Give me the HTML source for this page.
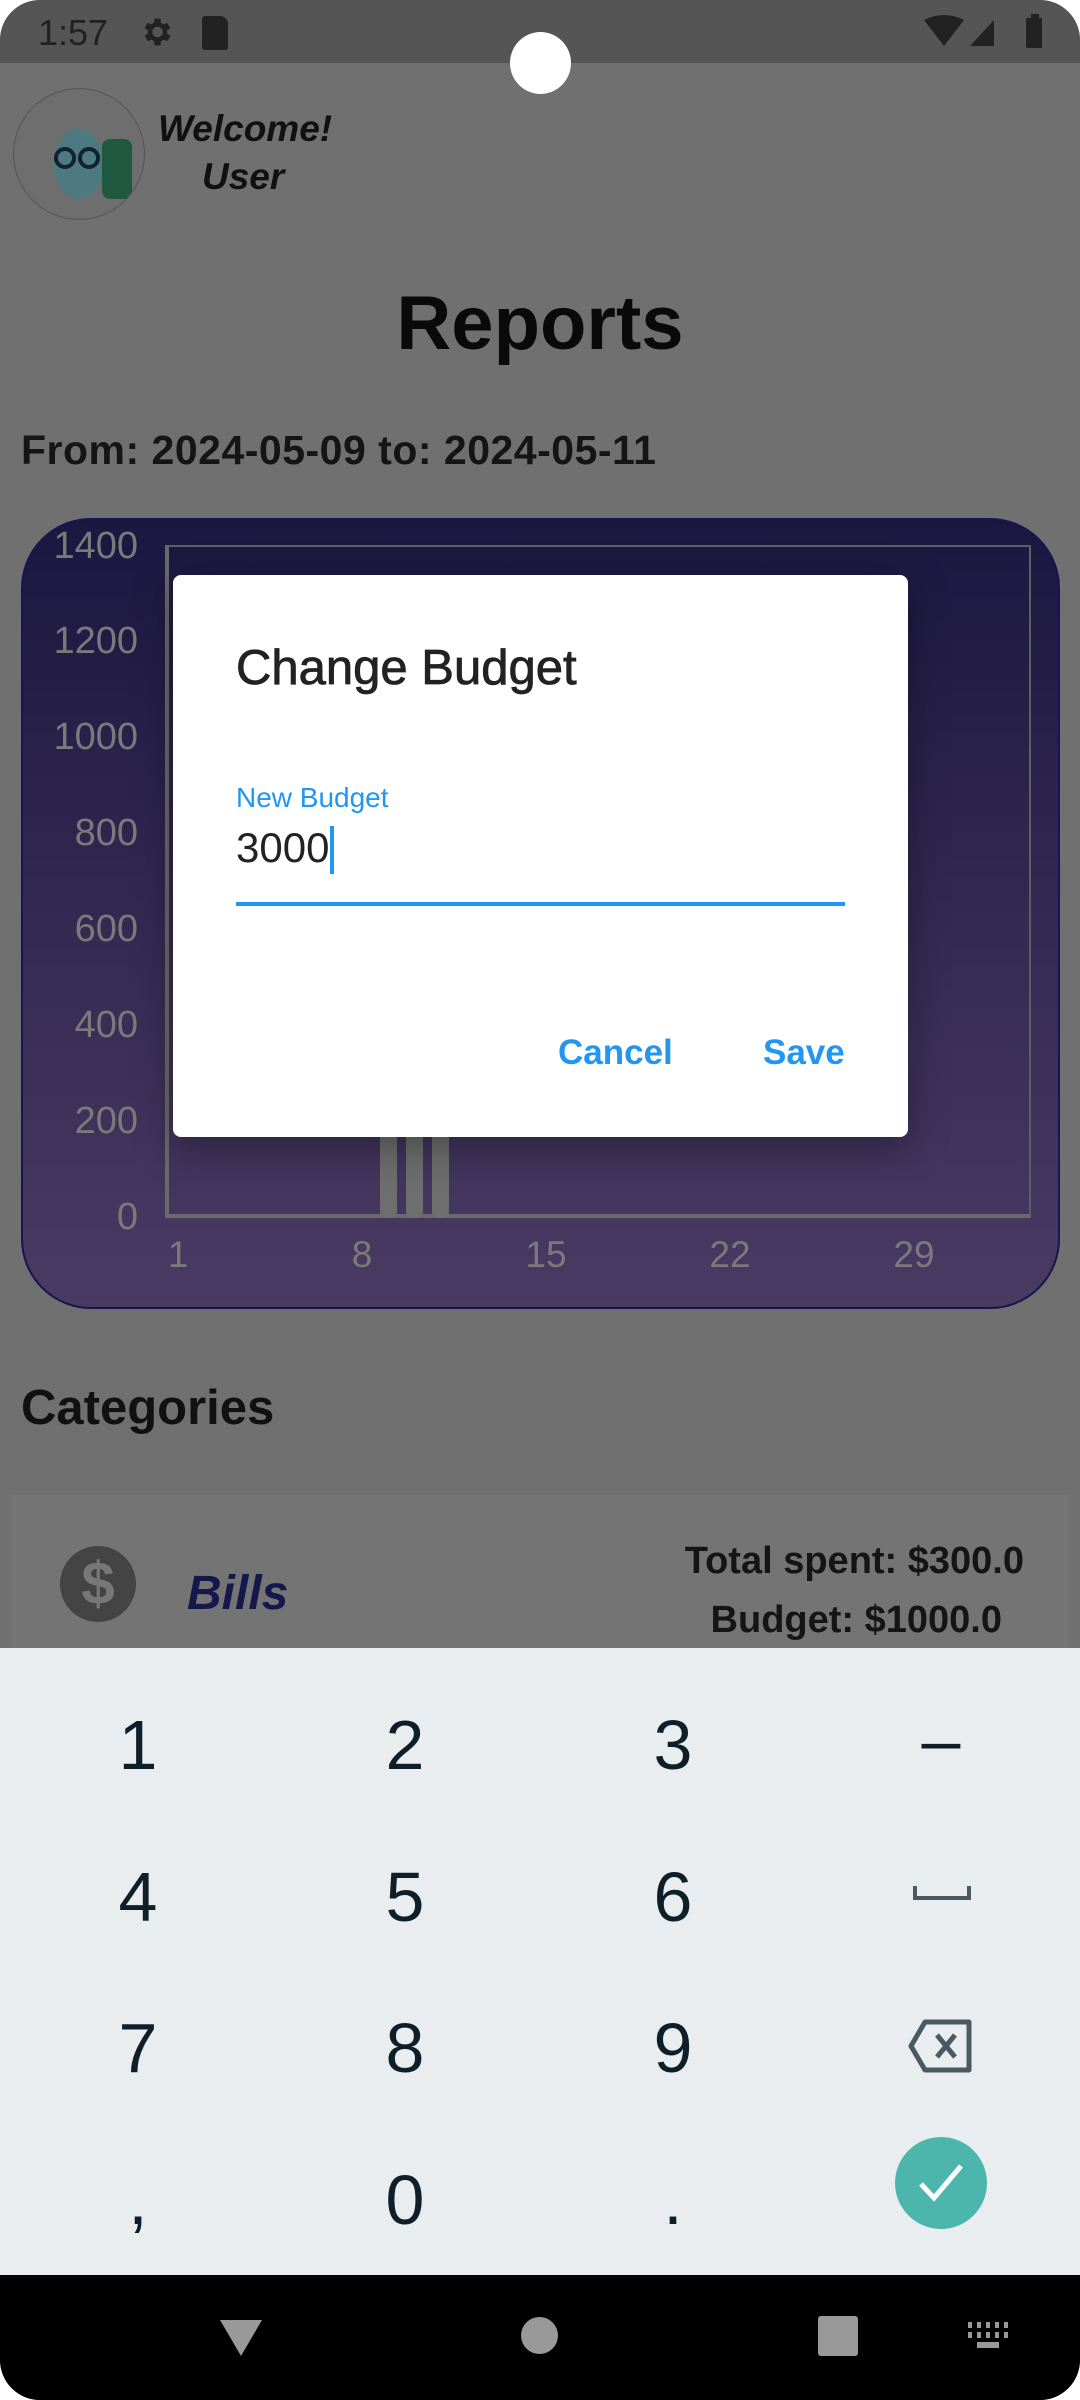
<!DOCTYPE html>
<html><head><meta charset="utf-8"><style>
*{margin:0;padding:0;box-sizing:border-box}
body{width:1080px;height:2400px;background:#fff;font-family:"Liberation Sans",sans-serif;overflow:hidden}
#s{position:absolute;left:0;top:0;width:1080px;height:2400px;border-radius:40px;overflow:hidden;background:#707070}
.a{position:absolute}
.yl{position:absolute;right:942px;font-size:38px;color:#7a7a7a;text-align:right;line-height:1}
.xl{position:absolute;top:1236px;font-size:37px;color:#7a7a7a;line-height:1;transform:translateX(-50%)}
.k{position:absolute;font-size:70px;color:#0f1f2a;transform:translate(-50%,-50%);line-height:1}
</style></head><body><div id="s">
<div class="a" style="left:0;top:0;width:1080px;height:63px;background:#555"></div>
<div class="a" style="left:38px;top:12px;font-size:36px;color:#222">1:57</div>
<svg class="a" style="left:138px;top:14px" width="36" height="36" viewBox="0 0 24 24"><path fill="#222" d="M19.4 13a7.5 7.5 0 0 0 0-2l2.1-1.6-2-3.5-2.5 1a7 7 0 0 0-1.7-1L15 3h-4l-.4 2.9a7 7 0 0 0-1.7 1l-2.5-1-2 3.5L6.6 11a7.5 7.5 0 0 0 0 2l-2.1 1.6 2 3.5 2.5-1a7 7 0 0 0 1.7 1L11 21h4l.4-2.9a7 7 0 0 0 1.7-1l2.5 1 2-3.5zM13 15.5a3.5 3.5 0 1 1 0-7 3.5 3.5 0 0 1 0 7z"/></svg>
<div class="a" style="left:202px;top:16px;width:26px;height:34px;background:#222;border-radius:3px 8px 3px 3px"></div>
<svg class="a" style="left:922px;top:14px" width="120" height="36" viewBox="0 0 120 36"><path fill="#222" d="M2 6 Q22 -4 42 6 L22 32Z"/><path fill="#222" d="M48 32 L72 6 V32Z"/><rect x="104" y="4" width="18" height="30" rx="2" fill="#222"/><rect x="109" y="0" width="8" height="5" fill="#222"/></svg>
<div class="a" style="left:510px;top:32px;width:61px;height:62px;border-radius:50%;background:#fff"></div>
<div class="a" style="left:13px;top:88px;width:132px;height:132px;border-radius:50%;border:1px solid #555;background:#6e6e6e;overflow:hidden">
<div class="a" style="left:40px;top:40px;width:50px;height:70px;border-radius:50%;background:#4d7a80"></div>
<div class="a" style="left:88px;top:50px;width:30px;height:60px;border-radius:8px;background:#1f5a40"></div>
<div class="a" style="left:40px;top:58px;width:22px;height:22px;border-radius:50%;border:4px solid #123"></div>
<div class="a" style="left:64px;top:58px;width:22px;height:22px;border-radius:50%;border:4px solid #123"></div></div>
<div class="a" style="left:158px;top:108px;font-size:37px;font-weight:bold;font-style:italic;color:#111">Welcome!</div>
<div class="a" style="left:202px;top:156px;font-size:37px;font-style:italic;font-weight:bold;color:#111">User</div>
<div class="a" style="left:0;width:1080px;top:280px;text-align:center;font-size:76px;font-weight:bold;color:#0a0a0a">Reports</div>
<div class="a" style="left:21px;top:427px;font-size:41px;font-weight:bold;color:#151515;letter-spacing:0.5px">From: 2024-05-09 to: 2024-05-11</div>
<div class="a" style="left:21px;top:518px;width:1039px;height:791px;border-radius:70px;border:2px solid #1a1450;background:linear-gradient(#1b1740,#4a3b63)"></div>
<div class="a" style="left:165px;top:545px;width:866px;height:673px;border:2px solid #5e5e66;border-left:4px solid #6a6a6a;border-bottom:4px solid #6a6a6a"></div>
<div class="yl" style="top:527px">1400</div><div class="yl" style="top:622px">1200</div><div class="yl" style="top:718px">1000</div><div class="yl" style="top:814px">800</div><div class="yl" style="top:910px">600</div><div class="yl" style="top:1006px">400</div><div class="yl" style="top:1102px">200</div><div class="yl" style="top:1198px">0</div>
<div class="xl" style="left:178px">1</div><div class="xl" style="left:362px">8</div><div class="xl" style="left:546px">15</div><div class="xl" style="left:730px">22</div><div class="xl" style="left:914px">29</div>
<div class="a" style="left:380px;top:1130px;width:17px;height:88px;background:#6e6e6e;border-radius:6px"></div>
<div class="a" style="left:406px;top:1130px;width:17px;height:88px;background:#6e6e6e;border-radius:6px"></div>
<div class="a" style="left:432px;top:1130px;width:17px;height:88px;background:#6e6e6e;border-radius:6px"></div>
<div class="a" style="left:173px;top:575px;width:735px;height:562px;background:#fff;border-radius:8px;box-shadow:0 10px 40px rgba(0,0,0,.35)"></div>
<div class="a" style="left:236px;top:640px;font-size:49px;color:#222;-webkit-text-stroke:0.8px #222">Change Budget</div>
<div class="a" style="left:236px;top:782px;font-size:28px;color:#2196f3">New Budget</div>
<div class="a" style="left:236px;top:824px;font-size:42px;color:#222">3000</div>
<div class="a" style="left:330px;top:826px;width:4px;height:48px;background:#2196f3"></div>
<div class="a" style="left:236px;top:902px;width:609px;height:4px;background:#2196f3"></div>
<div class="a" style="left:558px;top:1033px;font-size:35px;font-weight:bold;color:#2196f3">Cancel</div>
<div class="a" style="left:763px;top:1033px;font-size:35px;font-weight:bold;color:#2196f3">Save</div>
<div class="a" style="left:21px;top:1380px;font-size:49px;font-weight:bold;color:#111">Categories</div>
<div class="a" style="left:11px;top:1495px;width:1058px;height:200px;background:#747474"></div>
<div class="a" style="left:60px;top:1546px;width:76px;height:76px;border-radius:50%;background:#444;color:#777;font-size:60px;font-weight:bold;text-align:center;line-height:76px">$</div>
<div class="a" style="left:187px;top:1566px;font-size:48px;font-weight:bold;font-style:italic;color:#14184a">Bills</div>
<div class="a" style="right:56px;top:1540px;font-size:38px;font-weight:bold;color:#151515">Total spent: $300.0</div>
<div class="a" style="right:78px;top:1599px;font-size:38px;font-weight:bold;color:#151515">Budget: $1000.0</div>
<div class="a" style="left:0;top:1648px;width:1080px;height:627px;background:#e9edf0"></div>
<div class="k" style="left:138px;top:1745px">1</div><div class="k" style="left:405px;top:1745px">2</div><div class="k" style="left:673px;top:1745px">3</div><div class="k" style="left:941px;top:1740px">–</div>
<div class="k" style="left:138px;top:1897px">4</div><div class="k" style="left:405px;top:1897px">5</div><div class="k" style="left:673px;top:1897px">6</div>
<div class="a" style="left:913px;top:1886px;width:58px;height:14px;border:4px solid #4a5a63;border-top:none"></div>
<div class="k" style="left:138px;top:2048px">7</div><div class="k" style="left:405px;top:2048px">8</div><div class="k" style="left:673px;top:2048px">9</div>
<svg class="a" style="left:907px;top:2018px" width="68" height="56" viewBox="0 0 68 56"><path d="M18 4 H62 V52 H18 L4 28Z" fill="none" stroke="#4a5a63" stroke-width="5" stroke-linejoin="round"/><path d="M30 17 L48 39 M48 17 L30 39" stroke="#4a5a63" stroke-width="5"/></svg>
<div class="k" style="left:138px;top:2200px">,</div><div class="k" style="left:405px;top:2200px">0</div><div class="k" style="left:673px;top:2200px">.</div>
<div class="a" style="left:895px;top:2137px;width:92px;height:92px;border-radius:50%;background:#4db6ac"></div>
<svg class="a" style="left:915px;top:2160px" width="52" height="46" viewBox="0 0 52 46"><path d="M6 24 L19 38 L46 6" fill="none" stroke="#fff" stroke-width="5"/></svg>
<div class="a" style="left:0;top:2275px;width:1080px;height:125px;background:#000"></div>
<svg class="a" style="left:218px;top:2318px" width="46" height="40" viewBox="0 0 46 40"><path d="M2 2 H44 L23 38Z" fill="#999"/></svg>
<div class="a" style="left:521px;top:2317px;width:37px;height:37px;border-radius:50%;background:#999"></div>
<div class="a" style="left:818px;top:2316px;width:40px;height:40px;border-radius:3px;background:#999"></div>
<svg class="a" style="left:968px;top:2322px" width="42" height="28" viewBox="0 0 42 28"><g fill="#999"><rect x="0" y="0" width="4" height="6"/><rect x="9" y="0" width="4" height="6"/><rect x="18" y="0" width="4" height="6"/><rect x="27" y="0" width="4" height="6"/><rect x="36" y="0" width="4" height="6"/><rect x="0" y="10" width="4" height="6"/><rect x="9" y="10" width="4" height="6"/><rect x="18" y="10" width="4" height="6"/><rect x="27" y="10" width="4" height="6"/><rect x="36" y="10" width="4" height="6"/><rect x="9" y="20" width="22" height="6"/></g></svg>
</div></body></html>
